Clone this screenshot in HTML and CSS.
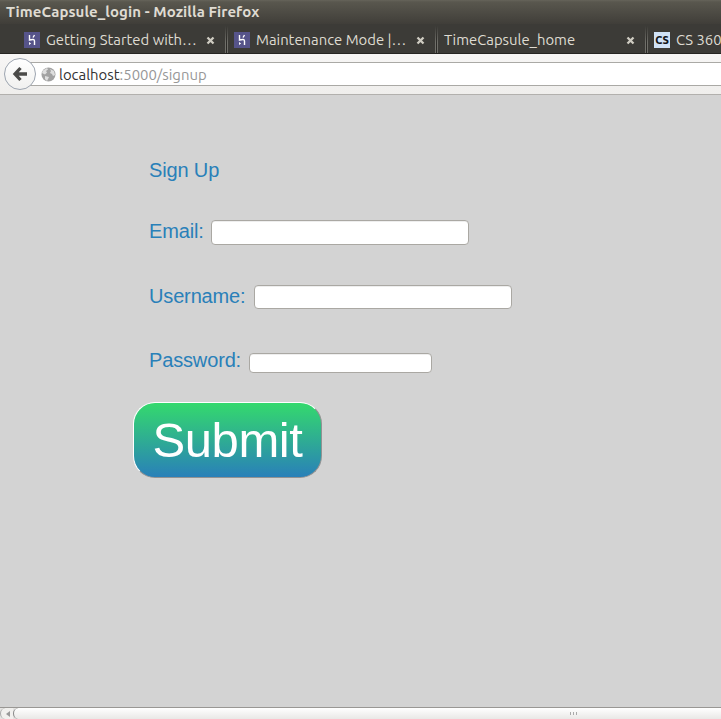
FILE: index.html
```html
<!DOCTYPE html>
<html lang="en">
<head>
<meta charset="utf-8">
<title>TimeCapsule_login</title>
<link rel="stylesheet" href="styles.css">
</head>
<body>
<svg class="defs" width="0" height="0">
  <symbol id="heroku" viewBox="0 0 16 16"><rect width="16" height="16" fill="#56548a"/><path d="M5.500 3v5Q10.500 6.500 10.500 9v4M10.500 3L9 5.500" fill="none" stroke="#fff" stroke-width="1.400"/><path d="M5 10l2.200 1.500L5 13z" fill="#fff"/></symbol>
  <symbol id="close" viewBox="0 0 9 9"><path d="M1.500 1.500l6 6M7.500 1.500l-6 6" fill="none" stroke="#cfccc2" stroke-width="2.300"/></symbol>
</svg>
<div class="window">
  <header class="title"><span class="title-text">TimeCapsule_login - Mozilla Firefox</span></header>
  <nav class="tabs">
    <div class="tab first"><svg class="fav"><use href="#heroku"/></svg><span class="label">Getting Started with…</span><svg class="close"><use href="#close"/></svg></div>
    <div class="tab"><svg class="fav"><use href="#heroku"/></svg><span class="label">Maintenance Mode |…</span><svg class="close"><use href="#close"/></svg></div>
    <div class="tab"><span class="label">TimeCapsule_home</span><svg class="close"><use href="#close"/></svg></div>
    <div class="tab"><span class="fav cs">CS</span><span class="label">CS 360</span></div>
  </nav>
  <div class="toolbar">
    <button class="back" aria-label="Back"><svg width="16" height="16" viewBox="0 0 16 16"><path d="M8.500 2L3 8l5.500 6M4 8h11" fill="none" stroke="#4b4b49" stroke-width="3.300"/></svg></button>
    <div class="address">
      <svg width="15" height="15" viewBox="0 0 15 15"><circle cx="7.500" cy="7.500" r="7" fill="#a2a2a2"/><path d="M2 3.500L6 1l1 1.500L5 4l1 1.500-2 2L1 6zM9 2l4 2 1 4-2 1-1-2-2-1 1-2zM4 9l4 1-1 2-1 2-2-2z" fill="#dedede"/></svg>
      <span class="url"><b>localhost</b>:5000/signup</span>
    </div>
  </div>
  <main class="page">
    <form class="form">
      <div class="heading">Sign Up</div>
      <label class="row email"><span>Email:</span><input type="text"></label>
      <label class="row user"><span>Username:</span><input type="text"></label>
      <label class="row pass"><span>Password:</span><input type="password"></label>
      <button type="button" class="submit">Submit</button>
    </form>
  </main>
  <footer class="scroll"><span class="step"><svg width="4" height="6" viewBox="0 0 4 6"><path d="M4 0v6L0 3z" fill="#999"/></svg></span><div class="thumb"><span class="grip"></span></div></footer>
</div>
</body>
</html>
```
FILE: styles.css
```css
* { box-sizing: border-box; }
body { margin: 0; background: #d3d3d3; }
.defs { display: block; }
.window { width: 721px; height: 719px; overflow: hidden; display: flex; flex-direction: column; font-family: Ubuntu, "Noto Sans", sans-serif; }
.title { height: 24px; flex: none; padding-left: 6px; background: linear-gradient(#66645a 0, #59574e 2px, #403e39 100%); color: #dfdbd2; font-weight: 700; font-size: 15px; line-height: 24px; white-space: nowrap; }
.title-text { letter-spacing: 0.07px; }
.tabs { height: 30px; flex: none; display: flex; background: #3c3b37; border-bottom: 1px solid #262522; padding-left: 16px; color: #dfdbd2; font-size: 14.85px; }
.tab { position: relative; width: 210px; flex: none; display: flex; align-items: center; padding: 3px 11px 0 8px; white-space: nowrap; }
.tab:not(.first)::before { content: ""; position: absolute; left: -1px; top: 2px; width: 3px; height: 27px; background: linear-gradient(#3c3b37, transparent 60%), linear-gradient(90deg, #706f69 0 1px, #2c2b28 1px 2px, #706f69 2px); }
.label { padding-bottom: 2px; }
.fav { width: 16px; height: 16px; margin-right: 6px; flex: none; }
.cs { background: #d0e2f6; color: #101418; font-weight: 800; font-size: 11px; line-height: 16px; text-align: center; }
.close { width: 9px; height: 9px; margin-left: auto; flex: none; }
.toolbar { height: 41px; flex: none; display: flex; padding-top: 8px; background: linear-gradient(#f7f6f5, #efeeec); border-bottom: 1px solid #b2b0ad; }
.back { width: 32px; height: 32px; margin: -4px 0 0 4px; padding: 0; border: 1px solid #9da5b0; border-radius: 50%; background: linear-gradient(#fff, #f0f0ef); display: flex; align-items: center; justify-content: center; z-index: 1; }
.address { height: 24px; flex: 1; margin-left: -8px; padding-left: 13px; display: flex; align-items: center; background: #fff; border: solid #aaa9a5; border-width: 1px 0; }
.url { margin: 1px 0 0 3px; font-size: 14.9px; color: #979797; white-space: nowrap; }
.url b { color: #333; font-weight: 400; }
.page { flex: 1; background: #d3d3d3; font-family: "Liberation Sans", Arial, sans-serif; }
.form { padding: 63px 0 0 149px; font-size: 20px; line-height: 24px; letter-spacing: -0.15px; color: #2980b9; }
.heading { height: 24px; }
.row { display: flex; }
.row input { width: 258px; height: 25px; padding: 0; border: 1px solid #aaa8a3; border-radius: 4px; background: #fff; box-shadow: inset 0 1px #eee; }
.row span { flex: none; }
.email { height: 24px; margin-top: 37px; }
.email span { width: 54px; }
.email input { margin: 1px 0 0 8px; }
.user { height: 24px; margin-top: 41px; }
.user span { width: 97px; }
.user input { height: 24px; margin: 1px 0 0 8px; }
.pass { height: 24px; margin-top: 40px; }
.pass span { width: 92px; }
.pass input { width: 183px; height: 20px; margin: 5px 0 0 8px; }
.submit { display: block; width: 189px; height: 76px; margin: 30px 0 0 -16px; padding: 0; border: 1px solid; border-color: #fff #929292 #929292 #fff; border-radius: 22px; background: linear-gradient(#34d96d, #2980b9); color: #fff; font: 49px/75px "Liberation Sans", Arial, sans-serif; letter-spacing: -0.4px; }
.scroll { height: 12px; flex: none; display: flex; background: #e5e4e2; border-top: 1px solid #999794; }
.step { width: 13px; border-left: 1px solid #aaa; border-radius: 8px 0 0 8px; background: #f1f0ee; display: flex; align-items: center; padding-left: 5px; }
.thumb { flex: 1; border-left: 1px solid #888; border-radius: 8px 0 0 8px; background: linear-gradient(#fff, #e9e8e6); padding: 4px 0 0 556px; }
.grip { display: block; width: 7px; height: 3px; background: repeating-linear-gradient(90deg, #aaa 0 1px, transparent 1px 3px); }
```
